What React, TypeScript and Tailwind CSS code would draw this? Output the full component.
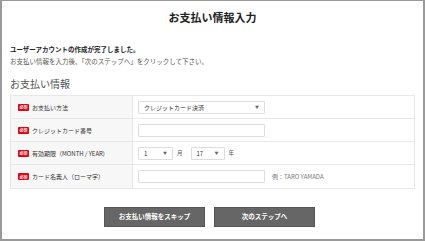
import React from "react";

const Badge = () => (
  <span className="inline-flex items-center justify-center w-[11px] h-[7px] bg-[#e60012] text-white text-[4px] font-bold leading-none rounded-[1px] mr-[3px]">必須</span>
);

const Row = ({ label, children, last }: { label: string; children: React.ReactNode; last?: boolean }) => (
  <div className={`flex h-[23px] ${last ? "" : "border-b border-[#e8e8e8]"}`}>
    <div className="w-[122px] bg-[#f7f7f7] border-r border-[#e8e8e8] flex items-center pl-[7px] text-[6px] text-[#333]">
      <Badge />
      <span>{label}</span>
    </div>
    <div className="flex-1 flex items-center pl-[5px] text-[6px] text-[#333]">{children}</div>
  </div>
);

const Select = ({ value, w }: { value: string; w: string }) => (
  <div className={`${w} h-[13px] border border-[#ddd] rounded-[1px] bg-white flex items-center justify-between px-[5px] text-[6px] text-[#333]`}>
    <span>{value}</span>
    <span className="text-[4px] text-[#666]">▼</span>
  </div>
);

export default function App() {
  return (
    <div
      className="w-[425px] h-[241px] bg-white border-[#9a9a9a] border-l-2 border-r-2 border-b-2 border-t overflow-hidden"
      style={{ fontFamily: '"Noto Sans CJK JP", "Noto Sans", sans-serif' }}
    >
      <div className="text-center text-[11px] font-bold text-[#222] pt-[8px] leading-[16px]">お支払い情報入力</div>
      <div className="pl-[8px] pr-[8px]">
        <div className="mt-[19px] text-[6.5px] font-bold text-[#222] leading-[10px]">ユーザーアカウントの作成が完了しました。</div>
        <div className="mt-[2px] text-[6.5px] text-[#555] leading-[10px]">お支払い情報を入力後、「次のステップへ」をクリックして下さい。</div>
        <div className="mt-[11px] text-[10px] text-[#555] leading-[14px]">お支払い情報</div>
        <div className="mt-[4px] border border-[#e8e8e8] w-[405px]">
          <Row label="お支払い方法">
            <Select value="クレジットカード決済" w="w-[127px]" />
          </Row>
          <Row label="クレジットカード番号">
            <div className="w-[127px] h-[13px] border border-[#ddd] rounded-[1px]" />
          </Row>
          <Row label="有効期限（MONTH / YEAR)">
            <Select value="1" w="w-[35px]" />
            <span className="ml-[4px] mr-[8px] text-[5.5px] text-[#555]">月</span>
            <Select value="17" w="w-[34px]" />
            <span className="ml-[4px] text-[5.5px] text-[#555]">年</span>
          </Row>
          <Row label="カード名義人（ローマ字）" last>
            <div className="w-[127px] h-[13px] border border-[#ddd] rounded-[1px]" />
            <span className="ml-[7px] text-[6px] text-[#777]">例：TARO YAMADA</span>
          </Row>
        </div>
      </div>
      <div className="flex justify-center gap-[9px] mt-[18px] pr-[6px]">
        <div className="w-[101px] h-[20px] bg-[#666] border border-[#555] flex items-center justify-center text-white text-[6.5px] font-bold">お支払い情報をスキップ</div>
        <div className="w-[101px] h-[20px] bg-[#666] border border-[#555] flex items-center justify-center text-white text-[6.5px] font-bold">次のステップへ</div>
      </div>
    </div>
  );
}
